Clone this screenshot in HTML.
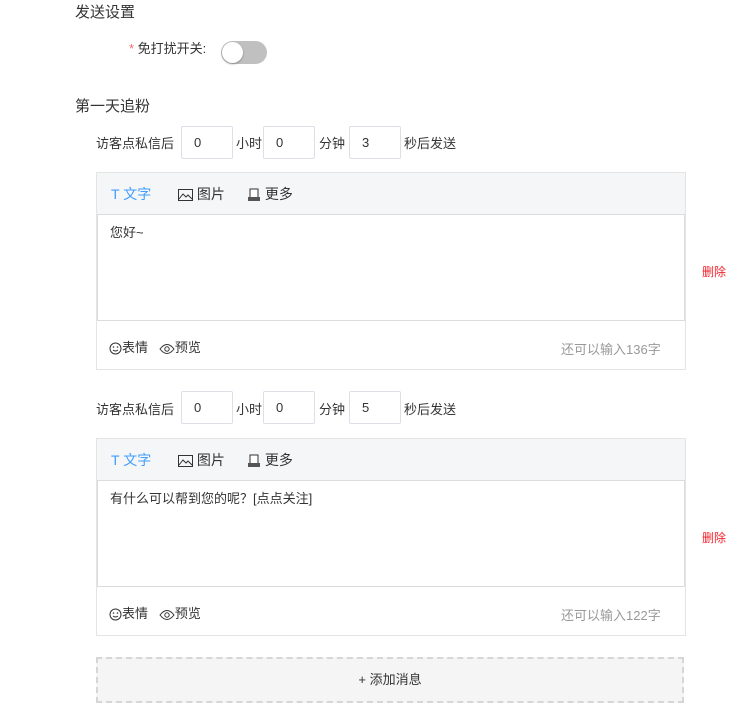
<!DOCTYPE html>
<html><head><meta charset="utf-8"><style>
*{box-sizing:border-box;margin:0;padding:0}
body{width:756px;height:716px;background:#fff;position:relative;overflow:hidden;font-family:"Liberation Sans","Noto Sans CJK SC",sans-serif;color:#333;font-size:13px}
.a{position:absolute;white-space:nowrap}
.h{font-size:15px;color:#333}
.inp{position:absolute;width:52px;height:33px;border:1px solid #dcdfe6;border-radius:2px;padding-left:12px;line-height:31px;font-size:13px}
.blk{position:absolute;left:96px;width:590px;border:1px solid #e4e4e4}
.tb{height:41px;background:#f5f6f8;position:relative}
.ta{position:absolute;left:0;width:588px;height:107px;border:1px solid #dcdcdc;background:#fff;padding:7px 12px;font-size:13px}
.ic{display:inline-block;vertical-align:middle}
</style></head><body>
<div class="a h" style="left:75px;top:1px">发送设置</div>
<div class="a" style="left:129px;top:38px"><span style="color:#f56c6c">*</span> 免打扰开关:</div>
<div class="a" style="left:221px;top:41px;width:46px;height:23px;border-radius:12px;background:#c0c0c0"><div style="position:absolute;left:1px;top:1px;width:21px;height:21px;border-radius:50%;background:#fff;box-shadow:0 1px 2px rgba(0,0,0,.3)"></div></div>
<div class="a h" style="left:75px;top:95px">第一天追粉</div>

<div class="a" style="left:96px;top:133px">访客点私信后</div>
<div class="inp" style="left:181px;top:126px">0</div>
<div class="a" style="left:236px;top:133px">小时</div>
<div class="inp" style="left:263px;top:126px">0</div>
<div class="a" style="left:319px;top:133px">分钟</div>
<div class="inp" style="left:349px;top:126px">3</div>
<div class="a" style="left:404px;top:133px">秒后发送</div>

<div class="blk" style="top:172px;height:198px">
 <div class="tb">
  <div class="a" style="left:14px;top:11px;color:#409eff;font-size:14px">T 文字</div>
  <div class="a" style="left:81px;top:11px;font-size:14px"><svg class="ic" width="15" height="12" viewBox="0 0 15 12"><rect x=".5" y=".5" width="14" height="11" fill="none" stroke="#333"/><path d="M1 10l4-5 3 3 2-2 4 4" fill="none" stroke="#333"/></svg> 图片</div>
  <div class="a" style="left:150px;top:11px;font-size:14px"><svg class="ic" width="14" height="14" viewBox="0 0 14 14"><rect x="3" y="1" width="8" height="9" fill="#fff" stroke="#333"/><rect x="1" y="9" width="12" height="4" fill="#555"/></svg> 更多</div>
 </div>
 <div class="ta" style="top:41px">您好~</div>
 <div class="a" style="left:12px;top:164px"><svg class="ic" width="13" height="13" viewBox="0 0 13 13"><circle cx="6.5" cy="6.5" r="5.5" fill="none" stroke="#333"/><circle cx="4.5" cy="5" r=".8" fill="#333"/><circle cx="8.5" cy="5" r=".8" fill="#333"/><path d="M4 8q2.5 2 5 0" fill="none" stroke="#333"/></svg>表情&nbsp;&nbsp;&nbsp;<svg class="ic" width="16" height="12" viewBox="0 0 16 12"><path d="M1 6q7-9 14 0q-7 9-14 0z" fill="none" stroke="#333"/><circle cx="8" cy="6" r="2.2" fill="none" stroke="#333"/></svg>预览</div>
 <div class="a" style="left:464px;top:166px;color:#999">还可以输入136字</div>
</div>
<div class="a" style="left:702px;top:263px;color:#f5222d;font-size:12px">删除</div>

<div class="a" style="left:96px;top:399px">访客点私信后</div>
<div class="inp" style="left:181px;top:391px">0</div>
<div class="a" style="left:236px;top:399px">小时</div>
<div class="inp" style="left:263px;top:391px">0</div>
<div class="a" style="left:319px;top:399px">分钟</div>
<div class="inp" style="left:349px;top:391px">5</div>
<div class="a" style="left:404px;top:399px">秒后发送</div>

<div class="blk" style="top:438px;height:198px">
 <div class="tb">
  <div class="a" style="left:14px;top:11px;color:#409eff;font-size:14px">T 文字</div>
  <div class="a" style="left:81px;top:11px;font-size:14px"><svg class="ic" width="15" height="12" viewBox="0 0 15 12"><rect x=".5" y=".5" width="14" height="11" fill="none" stroke="#333"/><path d="M1 10l4-5 3 3 2-2 4 4" fill="none" stroke="#333"/></svg> 图片</div>
  <div class="a" style="left:150px;top:11px;font-size:14px"><svg class="ic" width="14" height="14" viewBox="0 0 14 14"><rect x="3" y="1" width="8" height="9" fill="#fff" stroke="#333"/><rect x="1" y="9" width="12" height="4" fill="#555"/></svg> 更多</div>
 </div>
 <div class="ta" style="top:41px">有什么可以帮到您的呢？[点点关注]</div>
 <div class="a" style="left:12px;top:164px"><svg class="ic" width="13" height="13" viewBox="0 0 13 13"><circle cx="6.5" cy="6.5" r="5.5" fill="none" stroke="#333"/><circle cx="4.5" cy="5" r=".8" fill="#333"/><circle cx="8.5" cy="5" r=".8" fill="#333"/><path d="M4 8q2.5 2 5 0" fill="none" stroke="#333"/></svg>表情&nbsp;&nbsp;&nbsp;<svg class="ic" width="16" height="12" viewBox="0 0 16 12"><path d="M1 6q7-9 14 0q-7 9-14 0z" fill="none" stroke="#333"/><circle cx="8" cy="6" r="2.2" fill="none" stroke="#333"/></svg>预览</div>
 <div class="a" style="left:464px;top:166px;color:#999">还可以输入122字</div>
</div>
<div class="a" style="left:702px;top:529px;color:#f5222d;font-size:12px">删除</div>

<div class="a" style="left:96px;top:657px;width:588px;height:46px;border:2px dashed #d6d6d6;background:#f5f5f5;text-align:center;line-height:42px">+ 添加消息</div>
</body></html>
